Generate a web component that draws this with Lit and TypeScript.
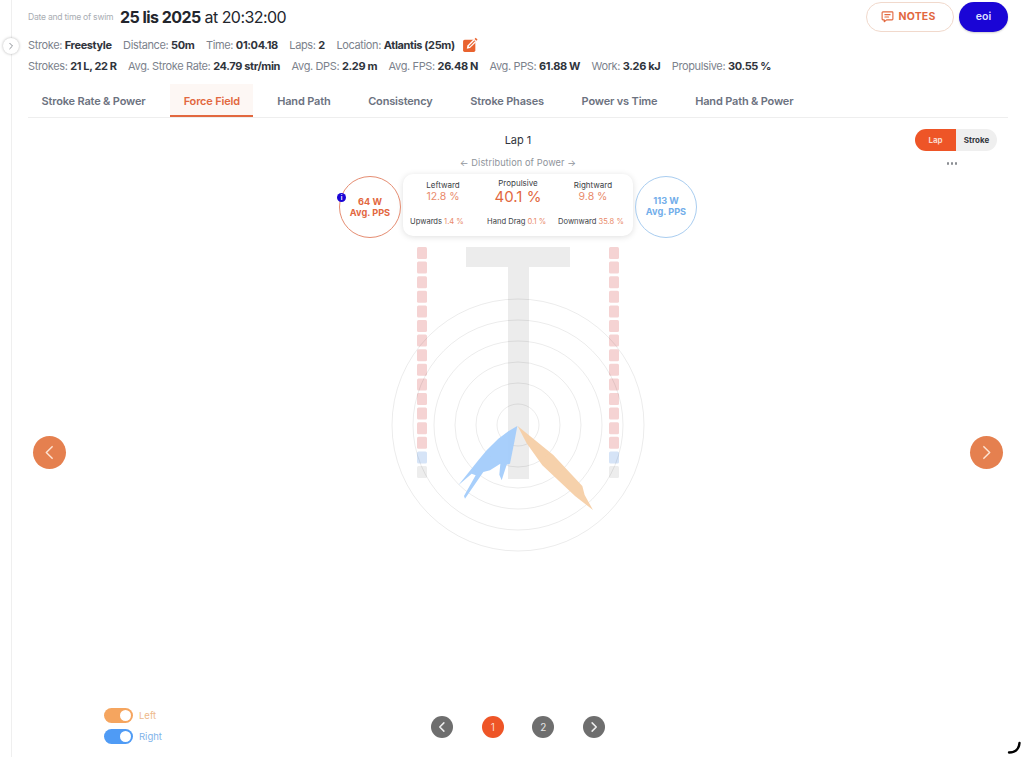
import { LitElement, html, css, svg } from "lit";
import { customElement } from "lit/decorators.js";

const tabs = ["Stroke Rate & Power", "Force Field", "Hand Path", "Consistency", "Stroke Phases", "Power vs Time", "Hand Path & Power"];
const row1: [string, string][] = [["Stroke:", "Freestyle"], ["Distance:", "50m"], ["Time:", "01:04.18"], ["Laps:", "2"], ["Location:", "Atlantis (25m)"]];
const row2: [string, string][] = [["Strokes:", "21 L, 22 R"], ["Avg. Stroke Rate:", "24.79 str/min"], ["Avg. DPS:", "2.29 m"], ["Avg. FPS:", "26.48 N"], ["Avg. PPS:", "61.88 W"], ["Work:", "3.26 kJ"], ["Propulsive:", "30.55 %"]];

const lanes = Array.from({ length: 16 }, (_, i) => i);
const laneFill = (i: number) => (i < 14 ? "#f5d3d3" : i === 14 ? "#d6e4f7" : "#ededed");

@customElement("app-root")
export class AppRoot extends LitElement {
  static styles = css`
    :host { display: block; height: 757px; overflow: hidden; background: #fff; color: #2b2f38; font-family: Inter, "Liberation Sans", sans-serif; position: relative; }
    .page { height: 757px; margin-left: 11px; border-left: 1px solid #efefef; padding: 0 16px; display: flex; flex-direction: column; box-sizing: border-box; position: relative; }
    .collapse { position: absolute; left: -9px; top: 38px; width: 16px; height: 16px; border-radius: 50%; background: #fff; box-shadow: 0 0 3px rgba(0,0,0,.3); display: flex; align-items: center; justify-content: center; }
    .top { display: flex; align-items: center; height: 32px; padding-top: 1px; box-sizing: border-box; }
    .dlabel { font-size: 8.6px; color: #a9adb3; letter-spacing: -0.25px; width: 92px; flex: none; white-space: nowrap; }
    .date { font-size: 16px; font-weight: 400; color: #23262d; white-space: nowrap; letter-spacing: -0.55px; }
    .date b { font-weight: 700; }
    .actions { margin-left: auto; display: flex; gap: 5px; margin-right: 0; }
    .notes { width: 88px; height: 30px; box-sizing: border-box; border: 1px solid #f1d9cc; border-radius: 15px; display: flex; align-items: center; justify-content: center; gap: 4px; color: #e2683f; font-size: 10.5px; font-weight: 700; letter-spacing: .2px; padding-right: 3px; }
    .user { width: 49px; height: 30px; border-radius: 15px; background: #1a05d6; color: #dfe0ff; font-size: 10.5px; font-weight: 600; display: flex; align-items: center; justify-content: center; box-shadow: 0 1px 2px rgba(0,0,0,.2); }
    .meta { display: flex; align-items: center; gap: 11.5px; font-size: 11px; color: #7c828c; white-space: nowrap; height: 21px; letter-spacing: -0.37px; }
    .meta b { color: #30343c; font-weight: 700; }
    .first { margin-top: 2px; }
    .edit { margin-left: -4px; display: block; }
    .tabs { display: flex; gap: 10.7px; height: 33px; margin-top: 8px; border-bottom: 1px solid #eeeeee; box-sizing: content-box; width: 980px; }
    .tab { padding: 0 13.5px; display: flex; align-items: center; font-size: 11px; font-weight: 600; color: #6c7280; white-space: nowrap; box-sizing: border-box; height: 33px; letter-spacing: -0.17px; }
    .tab.active { color: #e2683f; background: #fdf7f4; border-bottom: 2px solid #e2683f; padding-top: 2px; padding-left: 14px; padding-right: 13px; }
    .stage { flex: 1; display: flex; flex-direction: column; align-items: center; position: relative; margin-left: -16px; margin-right: -16px; }
    .title { font-size: 11px; color: #30343c; margin-top: 15px; line-height: 14px; }
    .sub { font-size: 9.2px; color: #8f949b; margin-top: 10px; line-height: 12px; letter-spacing: .1px; }
    .switch { position: absolute; right: 27px; top: 11px; display: flex; height: 22px; font-size: 8px; font-weight: 700; }
    .switch span { width: 41px; display: flex; align-items: center; justify-content: center; }
    .switch .on { background: #ee5527; color: #fbd9cc; border-radius: 11px 0 0 11px; }
    .switch .off { background: #efefef; color: #33363c; border-radius: 0 11px 11px 0; }
    .more { position: absolute; right: 67px; top: 44px; display: flex; gap: 1.5px; }
    .more i { width: 2.5px; height: 2.5px; border-radius: 50%; background: #8a8d92; display: block; }
    .stats { display: flex; align-items: flex-start; gap: 2px; margin-top: 5px; height: 64px; }
    .pps { width: 62px; height: 62px; margin-top: 2px; box-sizing: border-box; border-radius: 50%; border: 1px solid #e58d72; color: #e2683f; display: flex; flex-direction: column; align-items: center; justify-content: center; font-size: 9.2px; font-weight: 700; line-height: 11px; position: relative; text-align: center; }
    .pps.right { border-color: #a9cdf0; color: #72aeea; padding-bottom: 3px; }
    .info { position: absolute; left: -3px; top: 16px; width: 9px; height: 9px; border-radius: 50%; background: #1a05d6; color: #fff; font-size: 6px; line-height: 9px; font-weight: 700; text-align: center; }
    .card { width: 230px; height: 62px; box-sizing: border-box; border-radius: 10px; background: #fff; box-shadow: 0 1px 6px rgba(0,0,0,.13); padding: 5px 0 0; display: flex; flex-direction: column; }
    .upper { display: grid; grid-template-columns: 80px 70px 80px; text-align: center; height: 33px; }
    .upper .lbl { font-size: 8px; color: #3b3e45; line-height: 10px; }
    .upper .val { font-size: 10.5px; color: #e98a6b; line-height: 12px; margin-top: 1px; }
    .upper .main { margin-top: -1px; }
    .upper .main .val { font-size: 15px; color: #e2683f; line-height: 17px; margin-top: 0; }
    .upper .side { margin-top: 1px; }
    .lower { display: flex; font-size: 7.6px; color: #3b3e45; padding: 5px 0 0 7px; white-space: nowrap; }
    .lower em { font-style: normal; color: #e98a6b; margin-left: 2px; }
    .lower span:nth-child(1) { width: 77px; }
    .lower span:nth-child(2) { width: 71px; }
    .chart { display: block; margin-top: 9px; flex: none; }
    .nav { position: absolute; top: 318px; width: 33px; height: 33px; border-radius: 50%; background: #e5804f; display: flex; align-items: center; justify-content: center; }
    .nav.prev { left: 21px; }
    .nav.next { right: 21px; }
    .footer { position: absolute; left: 0; right: 0; bottom: 13px; display: grid; grid-template-columns: 1fr auto 1fr; align-items: center; }
    .legend { padding-left: 92px; display: flex; flex-direction: column; gap: 6px; }
    .leg { display: flex; align-items: center; gap: 6px; font-size: 9.5px; height: 15px; }
    .leg.l { color: #eeb98a; }
    .leg.r { color: #7fb3ea; }
    .sw { width: 29px; height: 15px; border-radius: 8px; display: flex; justify-content: flex-end; align-items: center; padding-right: 2px; box-sizing: border-box; }
    .leg.l .sw { background: #f5a55f; }
    .leg.r .sw { background: #4f9bf5; }
    .sw i { width: 11px; height: 11px; border-radius: 50%; background: #fff; display: block; }
    .pager { display: flex; gap: 28.5px; margin-top: 2px; }
    .pg { width: 22px; height: 22px; border-radius: 50%; background: #6e6e6e; color: #e6e6e6; font-size: 10px; display: flex; align-items: center; justify-content: center; }
    .pg.cur { background: #ee5527; color: #fbd9cc; }
    .spin { position: absolute; right: 0; bottom: 0; display: block; }
  `;

  private chart() {
    return html`<svg class="chart" width="260" height="306" viewBox="388 247 260 306" aria-hidden="true">
      <rect x="466" y="247" width="104" height="20" fill="#ececec"></rect>
      <rect x="508" y="267" width="21" height="212" fill="#ececec"></rect>
      ${lanes.map((i) => svg`
        <rect x="417" y=${247 + i * 14.6} width="10" height="12" rx="1.5" fill=${laneFill(i)}></rect>
        <rect x="609" y=${247 + i * 14.6} width="10" height="12" rx="1.5" fill=${laneFill(i)}></rect>`)}
      ${[21, 42, 63, 84, 105, 126].map((r) => svg`<circle cx="518" cy="425" r=${r} fill="none" stroke="#000" stroke-opacity=".1" stroke-width=".8"></circle>`)}
      <polygon transform="translate(455 422) scale(.3333)" fill="#a3ccfb" fill-opacity=".95" points="187,12 178,60 165,125 155,128 140,175 133,158 136,125 105,145 85,150 30,230 27,222 62,160 50,155 10,190 70,115 95,85 130,50 160,28"></polygon>
      <polygon transform="translate(385 240) scale(.3333)" fill="#f6cfa6" fill-opacity=".95" points="398,558 505,645 592,738 599,765 624,810 570,768 472,676 425,610"></polygon>
    </svg>`;
  }

  private chev(left: boolean, color: string, size: number, sw: number) {
    return html`<svg width=${size} height=${size} viewBox="0 0 16 16" fill="none" aria-hidden="true">
      <path d=${left ? "M10.5 2.5 5 8l5.5 5.5" : "M5.5 2.5 11 8l-5.500 5.500"} stroke=${color} stroke-width=${sw} stroke-linecap="round" stroke-linejoin="round"></path>
    </svg>`;
  }

  render() {
    return html`<div class="page">
      <div class="collapse">${this.chev(false, "#8b8f95", 8, 2)}</div>
      <div class="top">
        <span class="dlabel">Date and time of swim</span>
        <span class="date"><b>25 lis 2025</b> at 20:32:00</span>
        <div class="actions">
          <div class="notes">
            <svg width="13" height="13" viewBox="0 0 14 14" fill="none" stroke="#e2683f" stroke-width="1.2" stroke-linejoin="round" stroke-linecap="round" aria-hidden="true">
              <path d="M2 2h10a.8.8 0 0 1 .8.8v7a.8.8 0 0 1-.8.8H6l-2.500 2v-2H2a.8.8 0 0 1-.8-.8v-7A.8.8 0 0 1 2 2z"></path>
              <path d="M4.200 5h5.600M4.200 7.500h4"></path>
            </svg>
            NOTES
          </div>
          <div class="user">eoi</div>
        </div>
      </div>
      <div class="meta first">
        ${row1.map(([k, v]) => html`<span>${k} <b>${v}</b></span>`)}
        <svg class="edit" width="16" height="16" viewBox="0 0 15 15" aria-hidden="true">
          <rect x="1" y="2.500" width="11.500" height="11.500" rx="1.500" fill="#e9632f"></rect>
          <path d="M4.500 11l.6-3 5.800-5.800 2.400 2.400-5.800 5.800z" fill="#fff"></path>
          <path d="M6.200 8.600 11.500 3.300l.8.800-5.300 5.300z" fill="#e9632f"></path>
          <path d="M11.800 1.800l1.100-1 1.700 1.700-1 1.100z" fill="#e9632f"></path>
        </svg>
      </div>
      <div class="meta">
        ${row2.map(([k, v]) => html`<span>${k} <b>${v}</b></span>`)}
      </div>
      <div class="tabs">
        ${tabs.map((t, i) => html`<div class="tab ${i === 1 ? "active" : ""}">${t}</div>`)}
      </div>
      <div class="stage">
        <div class="title">Lap 1</div>
        <div class="sub">← Distribution of Power →</div>
        <div class="switch"><span class="on">Lap</span><span class="off">Stroke</span></div>
        <div class="more"><i></i><i></i><i></i></div>
        <div class="stats">
          <div class="pps"><span class="info">i</span><span>64 W</span><span>Avg. PPS</span></div>
          <div class="card">
            <div class="upper">
              <div class="side"><div class="lbl">Leftward</div><div class="val">12.8 %</div></div>
              <div class="main"><div class="lbl">Propulsive</div><div class="val">40.1 %</div></div>
              <div class="side"><div class="lbl">Rightward</div><div class="val">9.8 %</div></div>
            </div>
            <div class="lower">
              <span>Upwards<em>1.4 %</em></span>
              <span>Hand Drag<em>0.1 %</em></span>
              <span>Downward<em>35.8 %</em></span>
            </div>
          </div>
          <div class="pps right"><span>113 W</span><span>Avg. PPS</span></div>
        </div>
        ${this.chart()}
        <div class="nav prev">${this.chev(true, "#fde3d3", 17, 1.4)}</div>
        <div class="nav next">${this.chev(false, "#fde3d3", 17, 1.4)}</div>
      </div>
      <div class="footer">
        <div class="legend">
          <div class="leg l"><span class="sw"><i></i></span>Left</div>
          <div class="leg r"><span class="sw"><i></i></span>Right</div>
        </div>
        <div class="pager">
          <div class="pg">${this.chev(true, "#eeeeee", 12, 2)}</div>
          <div class="pg cur">1</div>
          <div class="pg">2</div>
          <div class="pg">${this.chev(false, "#eeeeee", 12, 2)}</div>
        </div>
        <div></div>
      </div>
    </div>
    <svg class="spin" width="24" height="18" viewBox="1000 739 24 18" aria-hidden="true">
      <path d="M1009 752.500c5.500-.2 10-3 10.500-9.500" fill="none" stroke="#000" stroke-width="2.400" stroke-linecap="round"></path>
    </svg>`;
  }
}
